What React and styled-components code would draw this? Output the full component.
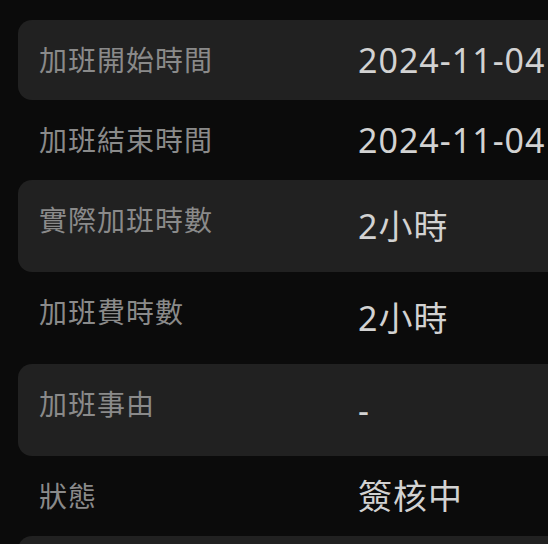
import React from "react";
import styled, { createGlobalStyle } from "styled-components";

const GlobalStyle = createGlobalStyle`
  html, body {
    margin: 0;
    padding: 0;
    background: #0b0b0b;
    overflow: hidden;
  }
  body {
    font-family: "Noto Sans", "Noto Sans CJK TC", sans-serif;
  }
`;

const Page = styled.div`
  width: 548px;
  height: 544px;
  overflow: hidden;
  padding-top: 20px;
  box-sizing: border-box;
`;

const List = styled.dl`
  margin: 0 0 0 18px;
  width: 620px;
  display: flex;
  flex-direction: column;
`;

const Row = styled.div`
  display: flex;
  align-items: center;
  height: ${(p) => (p.$tall ? 92 : 80)}px;
  padding-left: 21px;
  box-sizing: border-box;
  border-radius: 14px;
  background: ${(p) => (p.$shaded ? "#212121" : "transparent")};
`;

const Label = styled.dt`
  align-self: flex-start;
  flex: 0 0 319px;
  margin: 19px 0 0;
  font-family: "Noto Sans CJK TC", sans-serif;
  font-size: 28px;
  line-height: 40px;
  letter-spacing: 1px;
  color: #8a8a8a;
`;

const Value = styled.dd`
  margin: 0;
  font-family: "Noto Sans", "Noto Sans CJK TC", sans-serif;
  font-size: 34px;
  line-height: 46px;
  letter-spacing: 1px;
  color: #d2d2d2;
  white-space: nowrap;
`;

const rows = [
  { label: "加班開始時間", value: "2024-11-04" },
  { label: "加班結束時間", value: "2024-11-04" },
  { label: "實際加班時數", value: "2小時", tall: true },
  { label: "加班費時數", value: "2小時", tall: true },
  { label: "加班事由", value: "-", tall: true },
  { label: "狀態", value: "簽核中" },
  { label: "", value: "" },
];

export default function App() {
  return (
    <>
      <GlobalStyle />
      <Page>
        <List>
          {rows.map((r, i) => (
            <Row key={i} $shaded={i % 2 === 0} $tall={r.tall}>
              <Label>{r.label}</Label>
              <Value>{r.value}</Value>
            </Row>
          ))}
        </List>
      </Page>
    </>
  );
}
